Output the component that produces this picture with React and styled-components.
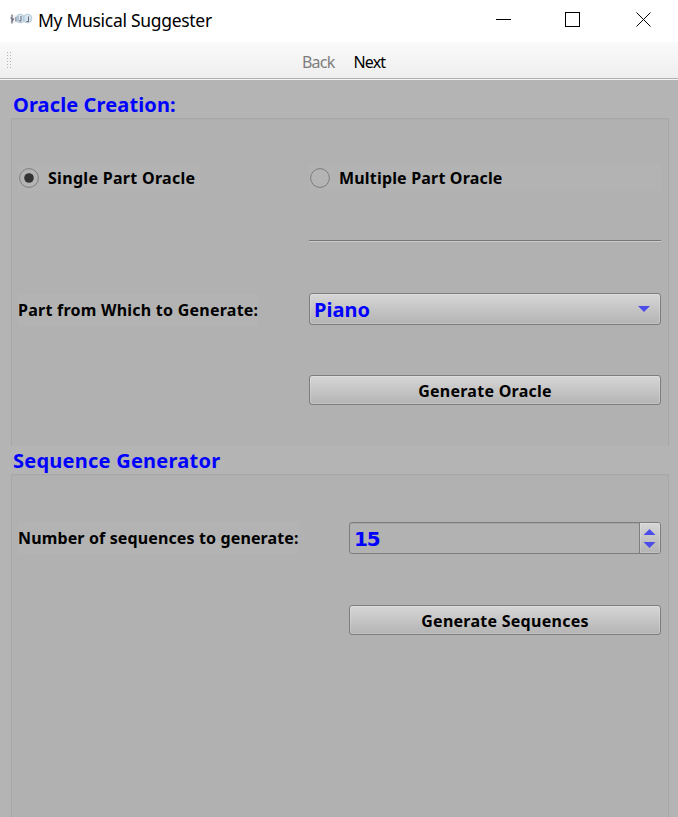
import React from "react";
import styled, { createGlobalStyle } from "styled-components";

const Global = createGlobalStyle`
  * { box-sizing: border-box; }
  body { margin: 0; background: #b2b2b2; overflow: hidden; }
  button { appearance: none; padding: 0; margin: 0; }
`;

const Window = styled.div`
  width: 678px;
  height: 817px;
  overflow: hidden;
  display: flex;
  flex-direction: column;
  background: #b4b4b4;
  color: #000;
  font-family: "Noto Sans", sans-serif;
`;

const TitleBar = styled.header`
  height: 42px;
  flex: none;
  display: flex;
  align-items: flex-start;
  background: #fff;
`;

const AppIcon = styled.svg`
  width: 24px;
  height: 12px;
  margin: 13px 0 0 9px;
`;

const Label = styled.span`
  display: block;
  white-space: nowrap;
  font-family: ${(p) => p.$family || "inherit"};
  font-weight: ${(p) => p.$weight || 700};
  font-size: ${(p) => p.$size || 16}px;
  letter-spacing: ${(p) => p.$track || 0}px;
  line-height: 26px;
  color: ${(p) => p.$color || "#000"};
`;

const WindowTitle = styled.h1`
  margin: 7px 0 0 5px;
  flex: 1;
  font-weight: 400;
`;

const Controls = styled.div`
  display: flex;
  gap: 53px;
  margin: 12px 26px 0 0;
`;

const ControlIcon = styled.svg`
  width: 16px;
  height: 16px;
  fill: none;
  stroke: #000;

  &:last-child {
    margin-left: 2px;
  }
`;

const ToolBar = styled.nav`
  height: 38px;
  flex: none;
  display: flex;
  align-items: flex-start;
  background: linear-gradient(#fafafa, #eeeeee);
  border-bottom: 1px solid #f4f4f4;
  box-shadow: inset 0 -1px 0 #b0b0b0;
`;

const Grip = styled.svg`
  width: 6px;
  height: 18px;
  margin: 9px 290px 0 6px;
  fill: #b4b4b4;
`;

const Actions = styled.div`
  display: flex;
  gap: 19px;
  padding-top: 7px;
`;

const Content = styled.main`
  flex: 1;
  display: flex;
  flex-direction: column;
  padding: 10px 9px 0 11px;
`;

const GroupTitle = styled.h2`
  margin: 0;
  height: 28px;
  padding: 2px 0 0 2px;
`;

const Group = styled.section`
  height: ${(p) => p.$height}px;
  display: grid;
  grid-template-columns: ${(p) => p.$columns};
  grid-template-rows: ${(p) => p.$rows};
  align-items: center;
  padding: 0 7px 0 6px;
  background: #b1b1b1;
  border: 1px solid #a7a7a7;
  border-bottom: 0;
  border-radius: 2px 2px 0 0;
  box-shadow: inset 0 1px 0 #aeaeae;
`;

const RadioRow = styled.div`
  display: flex;
  align-items: center;
  gap: 9px;
  height: 26px;
  background: #b3b3b3;
  justify-self: ${(p) => p.$justify || "stretch"};
  padding: 0 5px 0 1px;
`;

const RadioMark = styled.svg`
  width: 20px;
  height: 20px;
`;

const Divider = styled.hr`
  grid-column: 2;
  width: 100%;
  margin: 0;
  border: 0;
  border-top: 1px solid #777;
  border-bottom: 1px solid #cbcbcb;
`;

const FieldLabel = styled.label`
  justify-self: start;
  padding: 3px 0;
  margin-top: ${(p) => p.$drop || 0}px;
  background: #b3b3b3;
`;

const Field = styled.div`
  grid-column: 2;
  height: 32px;
  display: flex;
  align-items: center;
  justify-content: space-between;
  border: 1px solid #7d7d7d;
  border-radius: 3px;
  overflow: hidden;
`;

const Combo = styled(Field)`
  padding: 2px 10px 0 4px;
  background: linear-gradient(#d6d6d6, #b4b4b4);
  box-shadow: inset 0 0 0 1px rgba(255, 255, 255, 0.18);
`;

const Spin = styled(Field)`
  align-items: flex-start;
  padding-left: 4px;
  background: #b2b2b2;
  box-shadow: inset 0 1px 0 #a5a5a5;
`;

const SpinValue = styled.div`
  padding-top: 3px;
`;

const SpinButtons = styled.div`
  width: 21px;
  height: 30px;
  border-left: 1px solid #7d7d7d;
  background: linear-gradient(#d6d6d6, #b4b4b4);
  box-shadow: inset 0 0 0 1px rgba(255, 255, 255, 0.18);
`;

const Arrow = styled.svg`
  display: block;
  margin-bottom: ${(p) => p.$lift || 0}px;
  fill: #4c4ce8;
`;

const PushButton = styled.button`
  grid-column: 2;
  height: 30px;
  display: flex;
  align-items: center;
  justify-content: center;
  padding-top: 2px;
  border: 1px solid #7d7d7d;
  border-radius: 3px;
  background: linear-gradient(#d6d6d6, #b4b4b4);
  box-shadow: inset 0 0 0 1px rgba(255, 255, 255, 0.18);
  font-family: inherit;
`;

const gripDots = [0, 3, 6, 9, 12, 15];

function Radio({ label, checked, track, justify }) {
  return (
    <RadioRow $justify={justify}>
      <RadioMark viewBox="0 0 20 20">
        <circle cx="10" cy="10" r="9.4" fill="#b4b4b4" stroke="#7d7d7d" />
        {checked && <circle cx="10" cy="10" r="4.8" fill="#333" />}
      </RadioMark>
      <Label $track={track}>{label}</Label>
    </RadioRow>
  );
}

export default function App() {
  return (
    <Window>
      <Global />
      <TitleBar>
        <AppIcon viewBox="0 0 24 12">
          <path d="M1 3h22M1 5h22M1 7h22M1 9h22" stroke="#ccd3d9" strokeWidth=".5" />
          <path d="M3 1.500v9M1.500 5l3 1-2 3M7 4v4.500M9 3v5" stroke="#667" strokeWidth="1.200" fill="none" />
          <circle cx="11.500" cy="5.500" r="4.300" fill="#c4dcec" fillOpacity=".6" stroke="#a3bed0" strokeWidth=".8" />
          <circle cx="18.500" cy="5.500" r="4.300" fill="#c4dcec" fillOpacity=".6" stroke="#a3bed0" strokeWidth=".8" />
          <path d="M12 3v5h-2M19.500 3.500v5h-2" stroke="#667" fill="none" />
        </AppIcon>
        <WindowTitle>
          <Label $weight={400} $size={17.5} $track={-0.3}>My Musical Suggester</Label>
        </WindowTitle>
        <Controls>
          <ControlIcon viewBox="0 0 16 16"><path d="M0 7.500h15" /></ControlIcon>
          <ControlIcon viewBox="0 0 16 16"><rect x=".5" y=".5" width="14" height="14" /></ControlIcon>
          <ControlIcon viewBox="0 0 16 16"><path d="M.5.5l14 14M14.500.5l-14 14" /></ControlIcon>
        </Controls>
      </TitleBar>
      <ToolBar>
        <Grip viewBox="0 0 6 18">
          {gripDots.map((y) => (
            <React.Fragment key={y}>
              <rect x="1" y={y + 1} width="1" height="1" />
              <rect x="4" y={y + 1} width="1" height="1" />
            </React.Fragment>
          ))}
        </Grip>
        <Actions>
          <Label $weight={400} $track={-0.8} $color="#7d7d7d">Back</Label>
          <Label $weight={400} $track={-0.8}>Next</Label>
        </Actions>
      </ToolBar>
      <Content>
        <GroupTitle><Label $size={20} $track={0.12} $color="#0000ff">Oracle Creation:</Label></GroupTitle>
        <Group $height={328} $columns="291px 352px" $rows="118px 7px 130px 32px">
          <Radio label="Single Part Oracle" checked track={0.3} justify="start" />
          <Radio label="Multiple Part Oracle" track={0.18} />
          <Divider />
          <FieldLabel $drop={2}><Label $track={0.24}>Part from Which to Generate:</Label></FieldLabel>
          <Combo>
            <Label $size={20} $color="#0000ff">Piano</Label>
            <Arrow $lift={2} width="12" height="6" viewBox="0 0 12 6"><path d="M0 0h12L6 6z" /></Arrow>
          </Combo>
          <PushButton><Label $track={0.26}>Generate Oracle</Label></PushButton>
        </Group>
        <GroupTitle><Label $size={20} $track={0.24} $color="#0000ff">Sequence Generator</Label></GroupTitle>
        <Group $height={343} $columns="331px 312px" $rows="126px 38px">
          <FieldLabel><Label $track={0.13}>Number of sequences to generate:</Label></FieldLabel>
          <Spin>
            <SpinValue>
              <Label $size={20} $family='"DejaVu Sans", sans-serif' $track={-1.2} $color="#0000ff">15</Label>
            </SpinValue>
            <SpinButtons>
              <Arrow width="20" height="30" viewBox="0 0 20 30">
                <path d="M3.500 12h12l-6-6zM3.500 19h12l-6 6z" />
              </Arrow>
            </SpinButtons>
          </Spin>
          <PushButton><Label $track={0.26}>Generate Sequences</Label></PushButton>
        </Group>
      </Content>
    </Window>
  );
}
